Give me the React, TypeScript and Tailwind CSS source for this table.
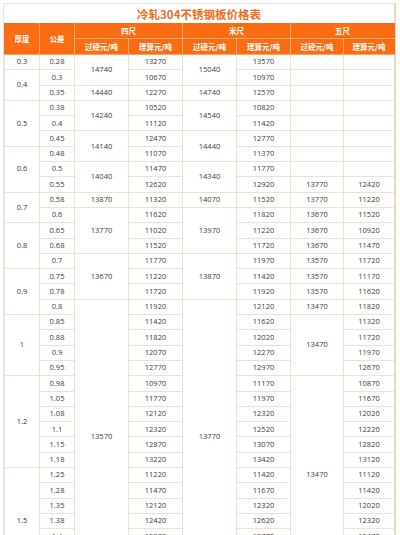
import React from "react";

type Span = [string, number];

// 厚度 (rowspan groups)
const THICK: Span[] = [
  ["0.3", 1], ["0.4", 2], ["0.5", 3], ["0.6", 3], ["0.7", 2],
  ["0.8", 3], ["0.9", 3], ["1", 4], ["1.2", 6], ["1.5", 7],
];

// 公差
const TOL = [
  "0.28", "0.3", "0.35", "0.38", "0.4", "0.45", "0.48", "0.5", "0.55", "0.58",
  "0.6", "0.65", "0.68", "0.7", "0.75", "0.78", "0.8", "0.85", "0.88", "0.9",
  "0.95", "0.98", "1.05", "1.08", "1.1", "1.15", "1.18", "1.25", "1.28", "1.35",
  "1.38", "1.4", "1.45", "1.48",
];

const FOUR_W: Span[] = [
  ["14740", 2], ["14440", 1], ["14240", 2], ["14140", 2], ["14040", 2],
  ["13870", 1], ["13770", 3], ["13670", 3], ["13570", 18],
];
const FOUR_C = [
  "13270", "10670", "12270", "10520", "11120", "12470", "11070", "11470", "12620", "11320",
  "11620", "11020", "11520", "11770", "11220", "11720", "11920", "11420", "11820", "12070",
  "12770", "10970", "11770", "12120", "12320", "12870", "13220", "11220", "11470", "12120",
  "12420", "12570", "12870", "13070",
];

const METER_W: Span[] = [
  ["15040", 2], ["14740", 1], ["14540", 2], ["14440", 2], ["14340", 2],
  ["14070", 1], ["13970", 3], ["13870", 3], ["13770", 18],
];
const METER_C = [
  "13570", "10970", "12570", "10820", "11420", "12770", "11370", "11770", "12920", "11520",
  "11820", "11220", "11720", "11970", "11420", "11920", "12120", "11620", "12020", "12270",
  "12970", "11170", "11970", "12320", "12520", "13070", "13420", "11420", "11670", "12320",
  "12620", "12770", "13070", "13270",
];

const FIVE_W: Span[] = [
  ["", 1], ["", 1], ["", 1], ["", 1], ["", 1], ["", 1], ["", 1], ["", 1],
  ["13770", 1], ["13770", 1], ["13670", 1], ["13670", 1], ["13670", 1],
  ["13570", 1], ["13570", 1], ["13570", 1], ["13470", 1], ["13470", 4], ["13470", 13],
];
const FIVE_C = [
  "", "", "", "", "", "", "", "", "12420", "11220",
  "11520", "10920", "11470", "11720", "11170", "11620", "11820", "11320", "11720", "11970",
  "12670", "10870", "11670", "12020", "12220", "12820", "13120", "11120", "11420", "12020",
  "12320", "12470", "12770", "12970",
];

// start row -> [value, span]
function starts(spans: Span[]) {
  const map = new Map<number, Span>();
  let row = 0;
  spans.forEach((s) => {
    map.set(row, s);
    row += s[1];
  });
  return map;
}

const thickAt = starts(THICK);
const fourAt = starts(FOUR_W);
const meterAt = starts(METER_W);
const fiveAt = starts(FIVE_W);

const td = "border border-[#efe2cc] text-center align-middle p-0 leading-none";
const th = "border border-[#fca46c] text-center align-middle p-0 leading-none font-semibold text-white";

export default function App() {
  return (
    <div
      className="w-[400px] h-[535px] overflow-hidden bg-white pl-[3px] pt-[3px]"
      style={{ fontFamily: '"Open Sans", "Noto Sans CJK SC", sans-serif' }}
    >
      <div className="w-[393px] border-l border-t border-[#e9e4dc] border-r-2 border-r-[#e7d7bb]">
        {/* Title */}
        <div className="h-[19px] flex items-center justify-center pt-[2px]">
          <h1
            className="text-[11.5px] font-bold text-[#ef6d1e] leading-none"
            style={{ fontFamily: '"Noto Sans CJK SC", sans-serif' }}
          >
            冷轧304不锈钢板价格表
          </h1>
        </div>

        <table className="w-[390px] table-fixed border-collapse text-[7.5px] text-[#3b3b3b]">
          <colgroup>
            <col className="w-[35px]" />
            <col className="w-[35px]" />
            <col className="w-[54px]" />
            <col className="w-[54px]" />
            <col className="w-[54px]" />
            <col className="w-[54px]" />
            <col className="w-[53px]" />
            <col className="w-[51px]" />
          </colgroup>
          <thead
            className="bg-[#fb6d12] text-[7.5px]"
            style={{ fontFamily: '"Noto Sans CJK SC", sans-serif' }}
          >
            <tr className="h-[15px]">
              <th rowSpan={2} className={`${th} border-t-[#fb6d12] border-l-[#fb6d12]`}>厚度</th>
              <th rowSpan={2} className={`${th} border-t-[#fb6d12]`}>公差</th>
              <th colSpan={2} className={`${th} border-t-[#fb6d12]`}>四尺</th>
              <th colSpan={2} className={`${th} border-t-[#fb6d12]`}>米尺</th>
              <th colSpan={2} className={`${th} border-t-[#fb6d12] border-r-[#fb6d12]`}>五尺</th>
            </tr>
            <tr className="h-[16px]">
              <th className={th}>过磅元/吨</th>
              <th className={th}>理算元/吨</th>
              <th className={th}>过磅元/吨</th>
              <th className={th}>理算元/吨</th>
              <th className={th}>过磅元/吨</th>
              <th className={`${th} border-r-[#fb6d12]`}>理算元/吨</th>
            </tr>
          </thead>
          <tbody>
            {TOL.map((tol, i) => {
              const thick = thickAt.get(i);
              const four = fourAt.get(i);
              const meter = meterAt.get(i);
              const five = fiveAt.get(i);
              return (
                <tr key={i} className="h-[15.3px]">
                  {thick && (
                    <td rowSpan={thick[1]} className={`${td} border-l-[#e9e4dc]`}>{thick[0]}</td>
                  )}
                  <td className={td}>{tol}</td>
                  {four && <td rowSpan={four[1]} className={td}>{four[0]}</td>}
                  <td className={td}>{FOUR_C[i]}</td>
                  {meter && <td rowSpan={meter[1]} className={td}>{meter[0]}</td>}
                  <td className={td}>{METER_C[i]}</td>
                  {five && <td rowSpan={five[1]} className={td}>{five[0]}</td>}
                  <td className={`${td} border-r-[#e7d7bb]`}>{FIVE_C[i]}</td>
                </tr>
              );
            })}
          </tbody>
        </table>
      </div>
    </div>
  );
}
